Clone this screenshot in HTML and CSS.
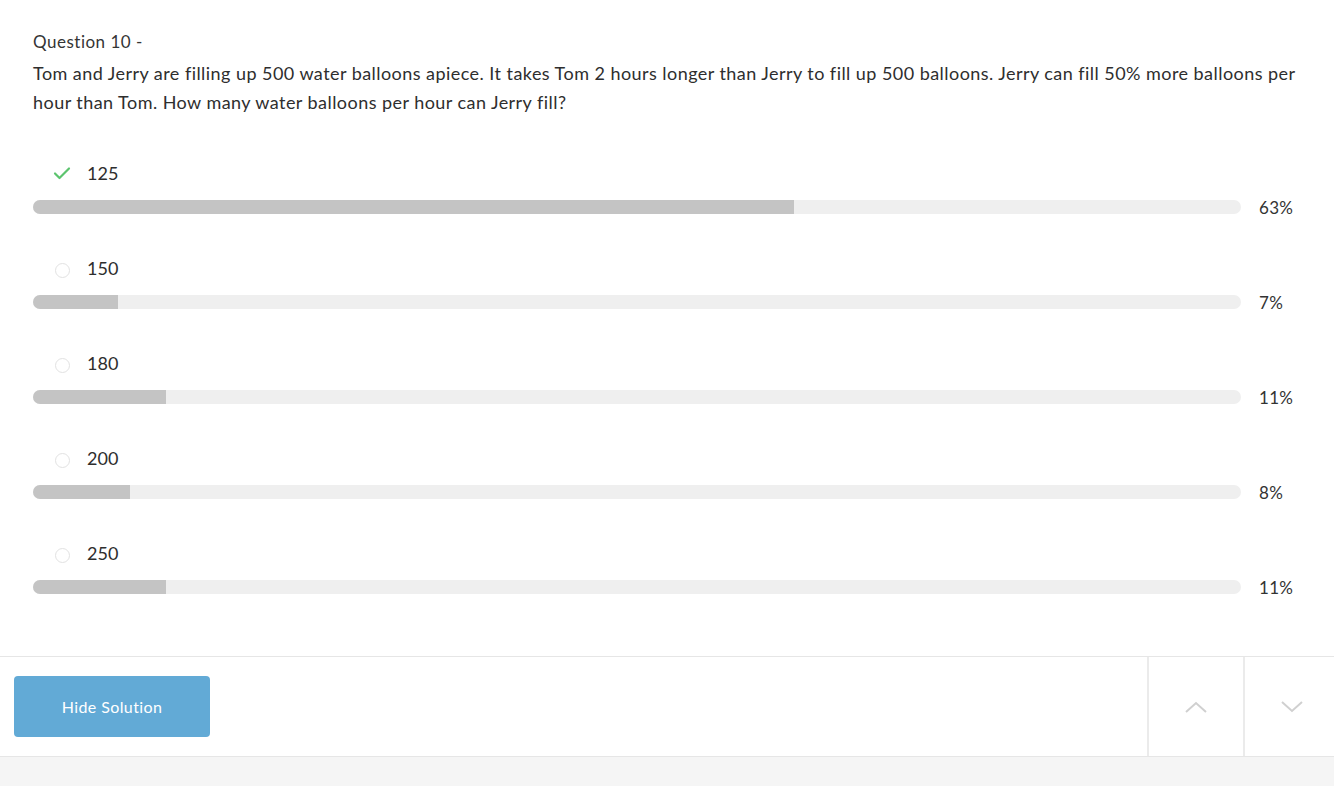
FILE: index.html
```html
<!DOCTYPE html>
<html>
<head>
<meta charset="utf-8">
<link rel="stylesheet" href="styles.css">
</head>
<body>
<div class="page">
  <div class="content">
    <div class="qtitle">Question 10 -</div>
    <div class="qtext">Tom and Jerry are filling up 500 water balloons apiece. It takes Tom 2 hours longer than Jerry to fill up 500 balloons. Jerry can fill 50% more balloons per hour than Tom. How many water balloons per hour can Jerry fill?</div>
    <div class="options">
      <div class="option">
        <div class="label-row">
          <span class="mark"><svg width="18" height="14" viewBox="0 0 18 14"><path d="M2 7.5 L6.5 12 L16 2.5" fill="none" stroke="#5cc46e" stroke-width="2.2" stroke-linecap="round" stroke-linejoin="round"/></svg></span>
          <span class="val">125</span>
        </div>
        <div class="bar-row"><div class="bar"><div class="fill" style="width:63%"></div></div><span class="pct">63%</span></div>
      </div>
      <div class="option">
        <div class="label-row"><span class="mark"><span class="radio"></span></span><span class="val">150</span></div>
        <div class="bar-row"><div class="bar"><div class="fill" style="width:7%"></div></div><span class="pct">7%</span></div>
      </div>
      <div class="option">
        <div class="label-row"><span class="mark"><span class="radio"></span></span><span class="val">180</span></div>
        <div class="bar-row"><div class="bar"><div class="fill" style="width:11%"></div></div><span class="pct">11%</span></div>
      </div>
      <div class="option">
        <div class="label-row"><span class="mark"><span class="radio"></span></span><span class="val">200</span></div>
        <div class="bar-row"><div class="bar"><div class="fill" style="width:8%"></div></div><span class="pct">8%</span></div>
      </div>
      <div class="option">
        <div class="label-row"><span class="mark"><span class="radio"></span></span><span class="val">250</span></div>
        <div class="bar-row"><div class="bar"><div class="fill" style="width:11%"></div></div><span class="pct">11%</span></div>
      </div>
    </div>
  </div>
  <div class="footer">
    <div class="footer-left"><button class="btn">Hide Solution</button></div>
    <div class="nav"><svg width="24" height="14" viewBox="0 0 24 14"><path d="M2 12 L12 3 L22 12" fill="none" stroke="#d0d0d0" stroke-width="2"/></svg></div>
    <div class="nav last"><svg width="24" height="14" viewBox="0 0 24 14"><path d="M2 2 L12 11 L22 2" fill="none" stroke="#d0d0d0" stroke-width="2"/></svg></div>
  </div>
  <div class="bottom"></div>
</div>
</body>
</html>
```
FILE: styles.css
```css
html, body { margin: 0; padding: 0; background: #fff; }
body { font-family: Lato, "Open Sans", "Liberation Sans", sans-serif; color: #2e2e2e; }
.page { width: 1334px; height: 786px; display: flex; flex-direction: column; }
.content { padding: 30px 30px 0 33px; height: 656px; box-sizing: border-box; flex: none; }
.qtitle { font-size: 17px; line-height: 24px; color: #353535; letter-spacing: 0.5px; }
.qtext { font-size: 18px; line-height: 29px; margin-top: 5px; color: #2e2e2e; letter-spacing: 0.45px; }
.options { margin-top: 44px; display: flex; flex-direction: column; gap: 42px; }
.option { display: flex; flex-direction: column; }
.label-row { display: flex; align-items: center; height: 24px; }
.mark { width: 54px; display: flex; justify-content: center; align-items: center; padding-left: 4px; box-sizing: border-box; }
.radio { width: 15px; height: 15px; border: 1px solid #e2e2e2; border-radius: 50%; box-sizing: border-box; display: block; margin-top: 4px; }
.val { font-size: 18px; color: #2e2e2e; }
.bar-row { display: flex; align-items: center; margin-top: 15px; height: 14px; }
.bar { width: 1208px; height: 14px; background: #efefef; border-radius: 7px; overflow: hidden; flex: none; }
.fill { height: 100%; background: #c4c4c4; }
.pct { margin-left: 18px; font-size: 17px; color: #333; letter-spacing: 0.3px; }
.footer { height: 101px; flex: none; border-top: 1px solid #e6e6e6; border-bottom: 1px solid #e6e6e6; box-sizing: border-box; display: flex; }
.footer-left { flex: 1; display: flex; align-items: center; padding-left: 14px; }
.btn { width: 196px; height: 61px; margin-top: -1px; background: #62aad6; color: #fff; border: none; border-radius: 4px; font-family: Lato, "Open Sans", "Liberation Sans", sans-serif; font-size: 16px; font-weight: 400; letter-spacing: 0.4px; }
.nav { width: 96px; border-left: 2px solid #ebebeb; box-sizing: border-box; display: flex; align-items: center; justify-content: center; }
.nav.last { width: 91px; padding-left: 4px; }
.bottom { flex: 1; background: #f5f5f5; }
```
